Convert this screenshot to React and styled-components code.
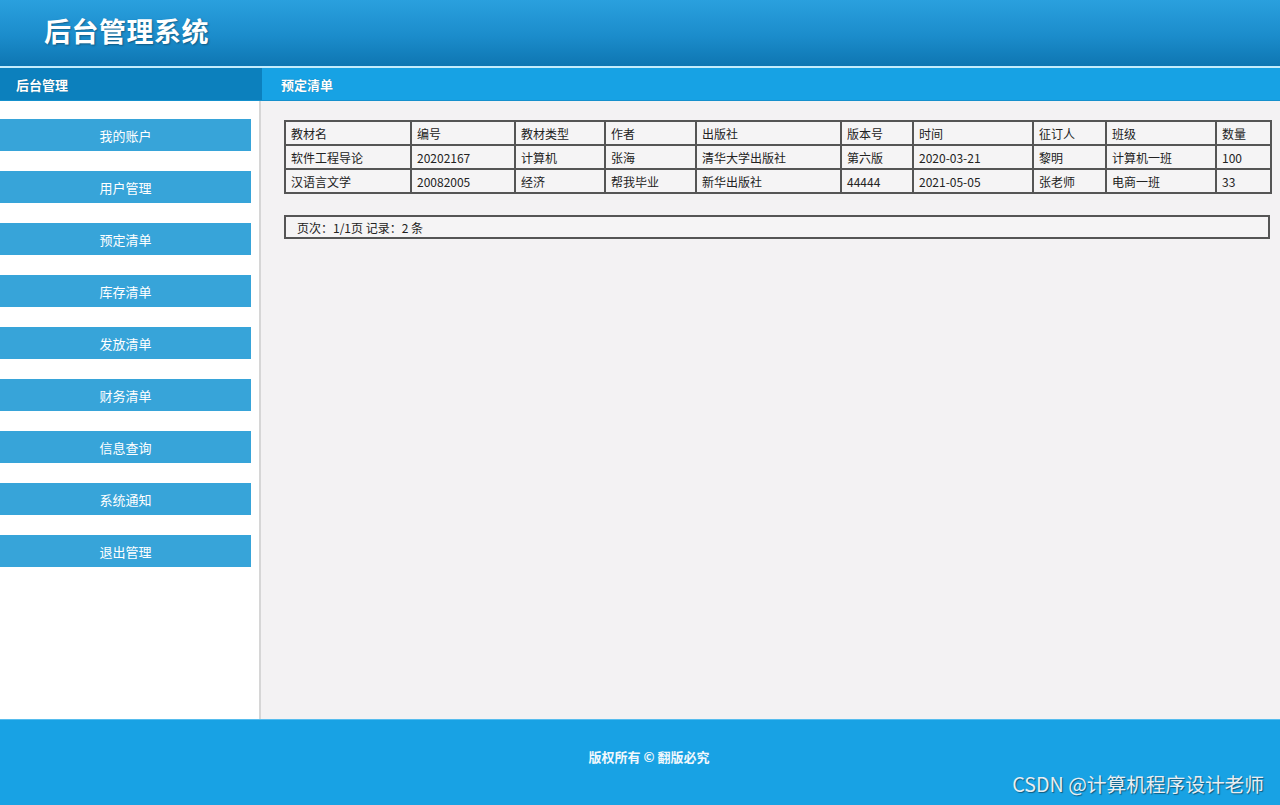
import React from 'react';
import styled, { createGlobalStyle } from 'styled-components';

const GlobalStyle = createGlobalStyle`
  html, body {
    margin: 0;
    padding: 0;
    height: 100%;
  }
  body {
    font-family: "Noto Sans CJK SC", "Noto Sans", sans-serif;
    font-size: 12px;
    color: #222;
    background: #f3f2f3;
  }
`;

const Page = styled.div`
  width: 1280px;
  height: 805px;
  display: flex;
  flex-direction: column;
  overflow: hidden;
  position: relative;
`;

const Header = styled.div`
  height: 68px;
  background: linear-gradient(to bottom, #2aa0de 0%, #1b8ccb 55%, #0e76b2 100%);
  border-bottom: 2px solid #c4ecfc;
  display: flex;
  align-items: center;
  padding-left: 44px;
  box-sizing: border-box;
  flex: none;
`;

const Title = styled.h1`
  margin: 0;
  color: #fff;
  font-size: 27px;
  font-weight: 700;
  letter-spacing: 0.5px;
  text-shadow: 1px 1px 2px rgba(0, 0, 0, 0.35);
  padding-bottom: 6px;
`;

const SubBar = styled.div`
  display: flex;
  height: 33px;
  flex: none;
  border-bottom: 1px solid #1590cc;
  box-sizing: border-box;
`;

const SubTitle = styled.div`
  box-sizing: border-box;
  width: ${(p) => p.$width || 'auto'};
  flex: ${(p) => (p.$width ? 'none' : 1)};
  background: ${(p) => p.$bg};
  color: #fff;
  font-size: 13px;
  font-weight: 700;
  display: flex;
  align-items: center;
  padding-left: ${(p) => p.$pad};
  text-shadow: 0 0 1px rgba(0, 0, 0, 0.3);
`;

const Body = styled.div`
  flex: 1;
  display: flex;
  min-height: 0;
`;

const Sidebar = styled.div`
  width: 259px;
  background: #fff;
  border-right: 2px solid #d6d6d6;
  padding-top: 18px;
  display: flex;
  flex-direction: column;
  gap: 20px;
  flex: none;
`;

const NavButton = styled.a`
  display: flex;
  align-items: center;
  justify-content: center;
  width: 251px;
  height: 32px;
  background: #37a4d9;
  color: #fff;
  font-size: 13px;
  text-decoration: none;
  cursor: pointer;
`;

const Main = styled.div`
  flex: 1;
  background: #f3f2f3;
  padding: 19px 10px 0 23px;
`;

const Table = styled.table`
  width: 986px;
  border-collapse: collapse;
  border: 2px solid #555;
  background: #f5f4f5;
  table-layout: fixed;
`;

const Row = styled.tr`
  height: 24px;
`;

const Cell = styled.td`
  border: 2px solid #555;
  padding: 0 5px;
  font-size: 12px;
  color: #222;
  white-space: nowrap;
  overflow: hidden;
`;

const Pager = styled.div`
  width: 986px;
  box-sizing: border-box;
  margin-top: 21px;
  height: 24px;
  border: 2px solid #555;
  background: #f5f4f5;
  display: flex;
  align-items: center;
  padding-left: 11px;
  font-size: 12px;
  color: #222;
`;

const Footer = styled.div`
  height: 86px;
  flex: none;
  background: #18a2e4;
  border-top: 1px solid #56bdee;
  box-sizing: border-box;
  display: flex;
  align-items: center;
  justify-content: center;
  padding-left: 18px;
  padding-bottom: 12px;
`;

const Copy = styled.span`
  color: #f2f8fc;
  font-size: 13px;
  font-weight: 700;
`;

const Watermark = styled.span`
  position: absolute;
  right: 16px;
  bottom: 7px;
  font-size: 19.7px;
  color: #e8eef2;
  text-shadow: 1px 1px 1px rgba(0, 0, 0, 0.45);
`;

const navItems = [
  '我的账户',
  '用户管理',
  '预定清单',
  '库存清单',
  '发放清单',
  '财务清单',
  '信息查询',
  '系统通知',
  '退出管理',
];

const columns = [
  ['教材名', 126],
  ['编号', 104],
  ['教材类型', 90],
  ['作者', 91],
  ['出版社', 145],
  ['版本号', 72],
  ['时间', 120],
  ['征订人', 73],
  ['班级', 110],
  ['数量', 55],
];

const rows = [
  ['软件工程导论', '20202167', '计算机', '张海', '清华大学出版社', '第六版', '2020-03-21', '黎明', '计算机一班', '100'],
  ['汉语言文学', '20082005', '经济', '帮我毕业', '新华出版社', '44444', '2021-05-05', '张老师', '电商一班', '33'],
];

const App = () => (
  <>
    <GlobalStyle />
    <Page>
      <Header>
        <Title>后台管理系统</Title>
      </Header>
      <SubBar>
        <SubTitle $width="262px" $bg="#0c80bd" $pad="16px">
          后台管理
        </SubTitle>
        <SubTitle $bg="#17a2e4" $pad="19px">
          预定清单
        </SubTitle>
      </SubBar>
      <Body>
        <Sidebar>
          {navItems.map((item) => (
            <NavButton key={item}>{item}</NavButton>
          ))}
        </Sidebar>
        <Main>
          <Table>
            <colgroup>
              {columns.map(([name, w]) => (
                <col key={name} style={{ width: w }} />
              ))}
            </colgroup>
            <tbody>
              <Row>
                {columns.map(([name]) => (
                  <Cell key={name}>{name}</Cell>
                ))}
              </Row>
              {rows.map((row) => (
                <Row key={row[1]}>
                  {row.map((v, i) => (
                    <Cell key={i}>{v}</Cell>
                  ))}
                </Row>
              ))}
            </tbody>
          </Table>
          <Pager>页次：1/1页 记录：2 条</Pager>
        </Main>
      </Body>
      <Footer>
        <Copy>版权所有 © 翻版必究</Copy>
      </Footer>
      <Watermark>CSDN @计算机程序设计老师</Watermark>
    </Page>
  </>
);

export default App;
